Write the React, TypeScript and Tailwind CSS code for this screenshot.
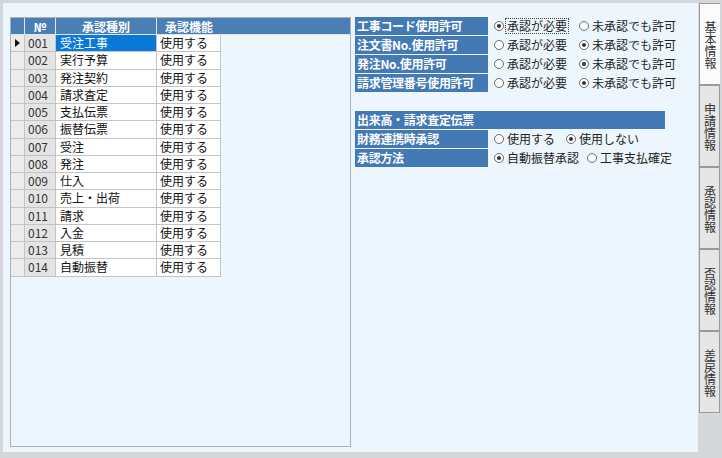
import React from "react";

const font = { fontFamily: '"Noto Sans CJK JP", "Noto Sans", sans-serif' };

const rows = [
  ["001", "受注工事"],
  ["002", "実行予算"],
  ["003", "発注契約"],
  ["004", "請求査定"],
  ["005", "支払伝票"],
  ["006", "振替伝票"],
  ["007", "受注"],
  ["008", "発注"],
  ["009", "仕入"],
  ["010", "売上・出荷"],
  ["011", "請求"],
  ["012", "入金"],
  ["013", "見積"],
  ["014", "自動振替"],
];

const tabs = ["基本情報", "申請情報", "承認情報", "否認情報", "差戻情報"];

function Radio({ checked, label, focus }: { checked?: boolean; label: string; focus?: boolean }) {
  return (
    <div className="flex items-center">
      <span className="w-[10px] h-[10px] rounded-full border border-[#6b6b6b] bg-white flex items-center justify-center">
        {checked && <span className="w-[4px] h-[4px] rounded-full bg-[#333]" />}
      </span>
      <span className={`ml-[2px] px-[1px] leading-[14px] ${focus ? "outline outline-1 outline-dotted outline-[#444]" : ""}`}>{label}</span>
    </div>
  );
}

function Option({ label, children }: { label: string; children: React.ReactNode }) {
  return (
    <div className="flex h-[18px] mb-[1px]">
      <div className="w-[133px] bg-[#4379b4] text-white font-semibold pl-[2px] leading-[18px] text-[12px] tracking-[-0.3px]">{label}</div>
      <div className="flex items-center pl-[6px] text-[#222]">{children}</div>
    </div>
  );
}

export default function App() {
  return (
    <div className="w-[722px] h-[458px] bg-[#d5d7da] flex text-[12px]" style={font}>
      <div className="w-[695px] h-[449px] mt-[3px] ml-[3px] bg-[#eef6fd] flex items-start">
        {/* grid */}
        <div className="ml-[7px] mt-[14px] w-[341px] h-[430px] border border-[#a9b1ba]">
          <div className="flex h-[17px] bg-[#4a7fb6] text-white font-semibold leading-[17px] border-b border-[#dfe6ee]">
            <div className="w-[14px] border-r border-[#dfe6ee]" />
            <div className="w-[31px] text-center border-r border-[#dfe6ee]">№</div>
            <div className="w-[101px] text-center border-r border-[#dfe6ee]">承認種別</div>
            <div className="w-[64px] text-center">承認機能</div>
          </div>
          {rows.map(([no, name], i) => (
            <div key={no} className="flex h-[17.25px] leading-[16px] text-[#111]">
              <div className="w-[14px] bg-[#ececec] border-r border-b border-[#c4c4c4] flex items-center justify-center">
                {i === 0 && (
                  <svg width="5" height="8" viewBox="0 0 5 8">
                    <path d="M0 0L5 4L0 8Z" fill="#111" />
                  </svg>
                )}
              </div>
              <div className="w-[31px] bg-[#e4e4e4] border-r border-b border-[#c4c4c4] pl-[3px] text-[#333]">{no}</div>
              <div className={`w-[101px] border-r border-b border-[#c4c4c4] pl-[4px] ${i === 0 ? "bg-[#0a78d7] text-white" : "bg-white"}`}>{name}</div>
              <div className="w-[64px] bg-white border-r border-b border-[#c4c4c4] pl-[3px]">使用する</div>
            </div>
          ))}
        </div>

        {/* settings */}
        <div className="ml-[4px] mt-[14px]">
          <Option label="工事コード使用許可">
            <div className="w-[85px]"><Radio checked label="承認が必要" focus /></div>
            <Radio label="未承認でも許可" />
          </Option>
          <Option label="注文書No.使用許可">
            <div className="w-[85px]"><Radio label="承認が必要" /></div>
            <Radio checked label="未承認でも許可" />
          </Option>
          <Option label="発注No.使用許可">
            <div className="w-[85px]"><Radio label="承認が必要" /></div>
            <Radio checked label="未承認でも許可" />
          </Option>
          <Option label="請求管理番号使用許可">
            <div className="w-[85px]"><Radio label="承認が必要" /></div>
            <Radio checked label="未承認でも許可" />
          </Option>

          <div className="mt-[19px] w-[310px] h-[18px] mb-[1px] bg-[#4379b4] text-white font-semibold pl-[2px] leading-[18px] tracking-[-0.3px]">出来高・請求査定伝票</div>
          <Option label="財務連携時承認">
            <div className="w-[72px]"><Radio label="使用する" /></div>
            <Radio checked label="使用しない" />
          </Option>
          <Option label="承認方法">
            <div className="w-[93px]"><Radio checked label="自動振替承認" /></div>
            <Radio label="工事支払確定" />
          </Option>
        </div>
      </div>

      {/* tabs */}
      <div className="ml-[1px] mt-[3px] flex flex-col">
        {tabs.map((t, i) => (
          <div
            key={t}
            className={`w-[21px] h-[82px] border border-[#9a9a9a] flex justify-center pt-[17px] text-[12px] text-[#333] ${i === 0 ? "bg-[#fbfbfb] border-r-0" : "bg-[#e6e6e6]"}`}
          >
            <span className="[writing-mode:vertical-rl] [text-orientation:upright] leading-[14px] tracking-[0px]">{t}</span>
          </div>
        ))}
      </div>
    </div>
  );
}
